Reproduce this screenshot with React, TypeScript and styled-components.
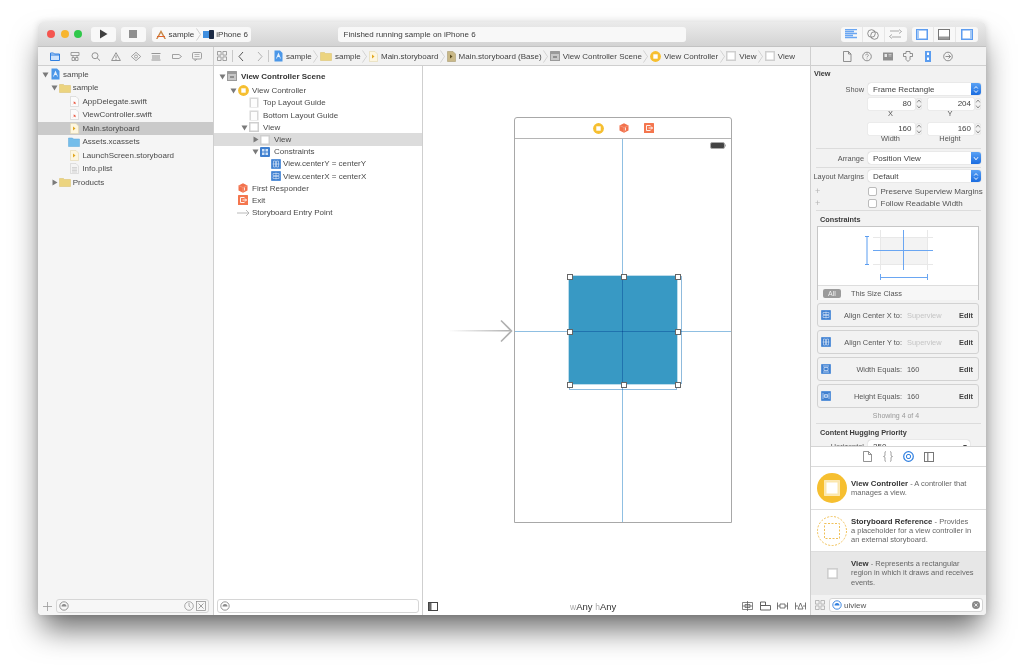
import React from 'react';
import styled, { createGlobalStyle } from 'styled-components';

const GlobalStyle = createGlobalStyle`
  html, body { margin: 0; padding: 0; background: #fff; height: 100%; overflow: hidden; }
  body { font-family: "Liberation Sans", Arial, sans-serif; color: #444; font-size: 8px; }
  #root { padding: 22px 38px 0; }
`;

const Window = styled.div`
  width: 948px;
  height: 593px;
  display: flex;
  flex-direction: column;
  border-radius: 5px 5px 4px 4px;
  overflow: hidden;
  background: #fff;
  box-shadow: 0 18px 30px -4px rgba(0, 0, 0, 0.58), 0 0 7px rgba(0, 0, 0, 0.12);
`;

/* ---------- title bar ---------- */
const TitleBar = styled.div`
  height: 25px;
  flex: none;
  display: flex;
  align-items: center;
  padding-left: 9px;
  background: linear-gradient(#ebebeb, #d3d3d3);
  border-bottom: 1px solid #c2c2c2;
  box-sizing: border-box;
`;
const Light = styled.span<{ $c: string }>`
  width: 8px;
  height: 8px;
  border-radius: 50%;
  background: ${p => p.$c};
  margin-right: 5.5px;
`;
const ToolButton = styled.div<{ $w: number; $ml?: number }>`
  width: ${p => p.$w}px;
  height: 15px;
  margin-left: ${p => p.$ml ?? 0}px;
  background: #f8f8f8;
  border-radius: 3px;
  display: flex;
  align-items: center;
  justify-content: center;
  flex: none;
`;
const Scheme = styled(ToolButton)`
  justify-content: flex-start;
  padding-left: 3px;
  box-sizing: border-box;
  gap: 2px;
  font-size: 8px;
  color: #3c3c3c;
  white-space: nowrap;
`;
const Status = styled(ToolButton)`
  justify-content: flex-start;
  padding-left: 6px;
  box-sizing: border-box;
  font-size: 8px;
  color: #3c3c3c;
`;
const Segments = styled.div<{ $ml: number }>`
  display: flex;
  width: 66px;
  height: 15px;
  margin-left: ${p => p.$ml}px;
  background: #f8f8f8;
  border-radius: 3px;
  flex: none;
`;
const Segment = styled.div`
  flex: 1;
  display: flex;
  align-items: center;
  justify-content: center;
  & + & { border-left: 1px solid #e6e6e6; }
`;

/* ---------- columns ---------- */
const Body = styled.div`
  flex: 1;
  display: flex;
  min-height: 0;
`;
const Column = styled.div<{ $w: number; $bg: string }>`
  width: ${p => p.$w}px;
  flex: none;
  display: flex;
  flex-direction: column;
  background: ${p => p.$bg};
  border-right: 1px solid #cfcfcf;
  box-sizing: border-box;
`;
const InspectorColumn = styled(Column)`
  border-right: 0;
  border-left: 1px solid #cfcfcf;
`;
const Editor = styled.div`
  flex: 1;
  display: flex;
  flex-direction: column;
  min-width: 0;
`;
const Strip = styled.div`
  height: 19px;
  flex: none;
  display: flex;
  align-items: center;
  background: #f2f2f2;
  border-bottom: 1px solid #cfcfcf;
  box-sizing: border-box;
`;
const NavTabs = styled(Strip)`
  padding-left: 12px;
  gap: 10.3px;
`;
const InspTabs = styled(Strip)`
  padding-left: 31px;
  gap: 10.3px;
`;
const TabCell = styled.span`
  width: 10px;
  flex: none;
  display: flex;
  justify-content: center;
`;
const PathBar = styled(Strip)`
  padding-left: 3px;
  font-size: 8px;
  color: #444;
  white-space: nowrap;
`;
const PathSep = styled.span`
  width: 1px;
  height: 12px;
  flex: none;
  background: #c8c8c8;
  margin: 0 5px;
`;
const PathGap = styled.span`
  width: 13px;
  flex: none;
`;
const Crumb = styled.span`
  display: flex;
  align-items: center;
  gap: 3px;
  flex: none;
`;
const Chevron = styled.svg`
  width: 5px;
  height: 13px;
  margin: 0 1.6px;
  flex: none;
`;
const SchemeChevron = styled(Chevron)`
  margin: 0;
`;

/* ---------- trees ---------- */
const Tree = styled.div<{ $top: number }>`
  flex: 1;
  padding-top: ${p => p.$top}px;
  min-height: 0;
`;
const Row = styled.div<{ $pad: number; $h: number; $sel?: string; $mb?: number }>`
  height: ${p => p.$h}px;
  margin-bottom: ${p => p.$mb ?? 0}px;
  display: flex;
  align-items: center;
  padding-left: ${p => p.$pad}px;
  background: ${p => p.$sel ?? 'transparent'};
  white-space: nowrap;
`;
const Disclosure = styled.span`
  width: 8px;
  flex: none;
  display: flex;
  justify-content: center;
`;
const IconSlot = styled.span`
  width: 12px;
  flex: none;
  display: flex;
  justify-content: center;
`;
const RowLabel = styled.span<{ $gap: number; $bold?: boolean }>`
  margin-left: ${p => p.$gap}px;
  font-size: 8px;
  font-weight: ${p => (p.$bold ? 700 : 400)};
  color: ${p => (p.$bold ? '#333' : '#4a4a4a')};
`;

/* ---------- footers ---------- */
const Footer = styled.div`
  height: 18px;
  flex: none;
  display: flex;
  align-items: center;
  box-sizing: border-box;
`;
const NavFooter = styled(Footer)`
  padding: 0 4px 0 5px;
  gap: 4px;
  color: #888;
`;
const Filter = styled.div<{ $bg: string }>`
  flex: 1;
  height: 14px;
  border: 1px solid #d6d6d6;
  border-radius: 3px;
  background: ${p => p.$bg};
  display: flex;
  align-items: center;
  padding: 0 2px;
  gap: 2px;
  box-sizing: border-box;
`;
const FilterFill = styled.span`
  flex: 1;
`;
const OutlineFooter = styled(Footer)`
  padding: 0 3px;
`;
const CanvasFooter = styled(Footer)`
  padding: 0 4px 0 5px;
  justify-content: space-between;
`;
const SizeClass = styled.span`
  font-size: 9.5px;
  color: #333;
  margin-left: 6px;
  small { font-size: 8.5px; color: #aaa; }
`;
const FooterIcons = styled.div`
  display: flex;
  align-items: center;
  gap: 6.5px;
`;

/* ---------- storyboard canvas ---------- */
const Canvas = styled.div`
  flex: 1;
  position: relative;
  background: #fff;
  min-height: 0;
`;
const Scene = styled.div`
  position: absolute;
  left: 91px;
  top: 51px;
  width: 218px;
  height: 406px;
  border: 1px solid #a8a8a8;
  border-radius: 3px 3px 0 0;
  box-sizing: border-box;
  background: #fff;
`;
const Dock = styled.div`
  height: 20px;
  border-bottom: 1px solid #b5b5b5;
  display: flex;
  align-items: center;
  justify-content: center;
  gap: 15px;
`;
const Guide = styled.div<{ $dir: 'h' | 'v' }>`
  position: absolute;
  background: #8fbfe2;
  mix-blend-mode: multiply;
  ${p =>
    p.$dir === 'v'
      ? 'left: 107px; top: 21px; bottom: 0; width: 1px;'
      : 'left: 0; right: 0; top: 213px; height: 1px;'}
  z-index: 2;
`;
const BlueView = styled.div`
  position: absolute;
  left: 54px;
  top: 158px;
  width: 108px;
  height: 108px;
  background: #3899c4;
  box-shadow: 0 0 0 0.5px #7db9d8;
`;
const Handle = styled.span<{ $x: number; $y: number }>`
  position: absolute;
  left: ${p => p.$x}px;
  top: ${p => p.$y}px;
  width: 4px;
  height: 4px;
  margin: -2.5px 0 0 -2.5px;
  background: #fff;
  border: 0.5px solid #666;
  z-index: 3;
`;
const BracketV = styled.div`
  position: absolute;
  left: 165px;
  top: 158px;
  width: 2px;
  height: 108px;
  border: 1px solid #8fbbdd;
  border-left-width: 0;
  box-sizing: border-box;
`;
const BracketH = styled.div`
  position: absolute;
  left: 54px;
  top: 269px;
  width: 108px;
  height: 3px;
  border: 1px solid #8fbbdd;
  border-top-width: 0;
  box-sizing: border-box;
`;
const Battery = styled.svg`
  position: absolute;
  right: 5px;
  top: 24px;
`;
const EntryArrow = styled.svg`
  position: absolute;
  left: 25px;
  top: 251px;
  z-index: 3;
`;

/* ---------- inspector ---------- */
const InspectorScroll = styled.div`
  height: 381px;
  flex: none;
  overflow: hidden;
  padding: 0 5px 0 0;
  box-sizing: border-box;
  border-bottom: 1px solid #d5d5d5;
`;
const InspTitle = styled.div`
  height: 14px;
  line-height: 15px;
  font-weight: 700;
  font-size: 7.3px;
  color: #3a3a3a;
  padding-left: 3px;
`;
const FormRow = styled.div<{ $mt: number }>`
  display: grid;
  grid-template-columns: 53px 113px;
  column-gap: 4px;
  align-items: center;
  margin-top: ${p => p.$mt}px;
`;
const FormLabel = styled.span`
  justify-self: end;
  white-space: nowrap;
  font-size: 7.4px;
  color: #555;
`;
const Select = styled.div`
  height: 12px;
  display: flex;
  align-items: center;
  padding-left: 5px;
  border-radius: 3px;
  background: #fff;
  box-shadow: 0 0 1px rgba(0, 0, 0, 0.35);
  font-size: 8px;
  color: #444;
  position: relative;
  overflow: hidden;
`;
const SelectCap = styled.span`
  position: absolute;
  right: 0;
  top: 0;
  bottom: 0;
  width: 10px;
  background: linear-gradient(#5aa2f5, #1a6ce0);
  display: flex;
  align-items: center;
  justify-content: center;
`;
const PlainCap = styled.span`
  position: absolute;
  right: 3px;
  top: 5px;
  border-top: 3px solid #444;
  border-left: 2px solid transparent;
  border-right: 2px solid transparent;
`;
const NumPair = styled.div`
  display: flex;
  gap: 6px;
`;
const NumCell = styled.div`
  width: 53.5px;
  display: flex;
  align-items: center;
  gap: 1px;
`;
const NumInput = styled.div`
  flex: 1;
  height: 12px;
  background: #fff;
  box-shadow: 0 0 1px rgba(0, 0, 0, 0.3);
  border-radius: 1px;
  text-align: right;
  line-height: 12px;
  padding-right: 3px;
  font-size: 8px;
  color: #444;
`;
const NumCaptions = styled.div`
  display: flex;
  gap: 6px;
  height: 8px;
  line-height: 8px;
  font-size: 7.4px;
  color: #555;
  span { width: 45px; margin-right: 8.5px; text-align: center; }
`;
const Rule = styled.div<{ $mt: number; $mb: number }>`
  height: 1px;
  background: #dcdcdc;
  margin: ${p => p.$mt}px 0 ${p => p.$mb}px 5px;
`;
const CheckRow = styled.div<{ $mt: number }>`
  display: flex;
  align-items: center;
  height: 10px;
  margin-top: ${p => p.$mt}px;
  padding-left: 4px;
  font-size: 8px;
  color: #555;
  white-space: nowrap;
`;
const Plus = styled.span`
  width: 53px;
  flex: none;
  color: #b5b5b5;
  font-size: 9px;
`;
const CheckBox = styled.span`
  width: 7px;
  height: 7px;
  flex: none;
  background: #fff;
  border: 0.5px solid #bbb;
  border-radius: 2px;
  margin-right: 3.5px;
`;
const SectionHead = styled.div<{ $mt: number }>`
  font-size: 7.3px;
  font-weight: 700;
  color: #3a3a3a;
  margin-top: ${p => p.$mt}px;
  padding-left: 9px;
  height: 10px;
  line-height: 10px;
`;
const ConstraintBox = styled.div`
  margin: 1px 2px 0 6px;
  height: 74px;
  border: 1px solid #c6c6c6;
  box-sizing: border-box;
  background: #fff;
  display: flex;
  flex-direction: column;
`;
const Diagram = styled.div`
  flex: 1;
  display: flex;
  justify-content: center;
`;
const SizeRow = styled.div`
  height: 14px;
  flex: none;
  background: #f7f7f7;
  border-top: 1px solid #ddd;
  display: flex;
  align-items: center;
  padding-left: 5px;
  gap: 10px;
  font-size: 7.4px;
  color: #555;
`;
const AllPill = styled.span`
  background: #9b9b9b;
  color: #f2f2f2;
  font-size: 7px;
  width: 18px;
  height: 9px;
  line-height: 9px;
  border-radius: 2px;
  text-align: center;
`;
const CardList = styled.div`
  margin: 3px 2px 0 6px;
  display: flex;
  flex-direction: column;
  gap: 3px;
`;
const Card = styled.div`
  height: 24px;
  border: 1px solid #d2d2d2;
  border-radius: 3px;
  box-sizing: border-box;
  display: grid;
  grid-template-columns: 12px 69px 50px 1fr;
  align-items: center;
  padding: 0 5px 0 3px;
  font-size: 7.4px;
  color: #555;
`;
const CardLabel = styled.span`
  text-align: right;
  white-space: nowrap;
`;
const CardValue = styled.span<{ $muted?: boolean }>`
  padding-left: 5px;
  color: ${p => (p.$muted ? '#c4c4c4' : '#555')};
  white-space: nowrap;
`;
const CardEdit = styled.span`
  text-align: right;
  font-weight: 700;
  color: #444;
`;
const Showing = styled.div`
  margin-top: 3px;
  text-align: center;
  font-size: 7px;
  color: #999;
  height: 9px;
  line-height: 9px;
`;
const HuggingRow = styled.div`
  margin-top: 2px;
  display: grid;
  grid-template-columns: 53px 102px;
  column-gap: 4px;
  align-items: center;
`;

/* ---------- library ---------- */
const LibTabs = styled.div`
  height: 20px;
  flex: none;
  display: flex;
  align-items: center;
  padding-left: 51px;
  gap: 10.5px;
  background: #fff;
  border-bottom: 1px solid #dcdcdc;
  box-sizing: border-box;
`;
const LibItem = styled.div<{ $sel?: boolean; $h: number }>`
  height: ${p => p.$h}px;
  flex: none;
  display: flex;
  align-items: center;
  box-sizing: border-box;
  background: ${p => (p.$sel ? '#e7e7e7' : '#fff')};
  border-bottom: 1px solid ${p => (p.$sel ? '#e7e7e7' : '#dedede')};
  padding-left: 6px;
`;
const LibIconSlot = styled.span`
  width: 30px;
  margin-right: 4px;
  flex: none;
  display: flex;
  justify-content: center;
`;
const LibText = styled.div`
  font-size: 7.5px;
  line-height: 9.2px;
  color: #666;
  white-space: nowrap;
  b { color: #333; font-weight: 700; font-size: 7.8px; }
`;
const SearchBar = styled.div`
  flex: 1;
  display: flex;
  align-items: center;
  padding: 0 3px 0 4px;
  gap: 4px;
  background: #f2f2f2;
`;
const SearchField = styled.div`
  flex: 1;
  height: 14px;
  background: #fff;
  border: 1px solid #d4d4d4;
  border-radius: 3px;
  box-sizing: border-box;
  display: flex;
  align-items: center;
  padding: 0 2px;
  gap: 2px;
  font-size: 8px;
  color: #555;
`;
const SearchText = styled.span`
  flex: 1;
`;
const IconImg = styled.svg`
  flex: none;
  display: block;
`;

/* ---------- icons ---------- */
const Svg = ({ w = 11, h = 11, vb, children }: { w?: number; h?: number; vb?: string; children: React.ReactNode }) => (
  <IconImg width={w} height={h} viewBox={vb ?? `0 0 ${w} ${h}`}>
    {children}
  </IconImg>
);

const GRAY = '#8a8a8a';
const BLUE = '#2f7fe0';

const Tri = ({ open }: { open?: boolean }) => (
  <Svg w={7} h={7}>
    {open ? <path d="M0.5 1.5h6L3.5 6.5z" fill="#7a7a7a" /> : <path d="M1.5 0.5v6L6.5 3.5z" fill="#7a7a7a" />}
  </Svg>
);
const AppIcon = () => (
  <Svg w={9} h={12}>
    <path d="M0.5 0.5h5.5l2.5 2.5v8.5h-8z" fill="#4b97e8" />
    <path d="M4.5 2.5l2.4 6H6l-.5-1.4h-2L3 8.5h-1z" fill="#e4f0fc" />
  </Svg>
);
const Folder = () => (
  <Svg w={12} h={10}>
    <path d="M0.5 1.5h4l1 1h6v7h-11z" fill="#ecd47f" stroke="#d9bf6a" strokeWidth="0.5" />
  </Svg>
);
const BlueFolder = () => (
  <Svg w={12} h={10}>
    <path d="M0.5 1h4l1 1h6v7.5h-11z" fill="#74bdea" stroke="#5aa7da" strokeWidth="0.5" />
  </Svg>
);
const SwiftFile = () => (
  <Svg w={9} h={11}>
    <path d="M0.5 0.5h5.5l2.5 2.5v7.5h-8z" fill="#fbfbfb" stroke="#cfcfcf" strokeWidth="0.6" />
    <path d="M2 8.5l3-1 1 1-1-3-1 1-1-2 1 3z" fill="#e8452c" />
  </Svg>
);
const BoardFile = ({ dark }: { dark?: boolean }) => (
  <Svg w={9} h={11}>
    <path d="M0.5 0.5h5.5l2.5 2.5v7.5h-8z" fill={dark ? '#c9b887' : '#fdf6e0'} stroke={dark ? '#a89a70' : '#e3d7ae'} strokeWidth="0.6" />
    <path d="M3 3.5l2.5 2-2.5 2z" fill={dark ? '#5a4c20' : '#e2a81f'} />
  </Svg>
);
const PlistFile = () => (
  <Svg w={9} h={11}>
    <path d="M0.5 0.5h5.5l2.5 2.5v7.5h-8z" fill="#f4f4f4" stroke="#cfcfcf" strokeWidth="0.6" />
    <path d="M2 4.5h5M2 6h5M2 7.5h5M2 9h5" stroke="#bdbdbd" strokeWidth="0.6" />
  </Svg>
);
const SceneIcon = () => (
  <Svg w={10} h={10}>
    <rect width="10" height="10" fill="#9a9a9a" rx="0.5" />
    <rect x="1" y="3" width="8" height="6" fill="#c7c7c7" />
    <rect x="3" y="5" width="4" height="2" fill="#8f8f8f" />
  </Svg>
);
const VcCircle = ({ s = 11 }: { s?: number }) => (
  <Svg w={s} h={s} vb="0 0 11 11">
    <circle cx="5.5" cy="5.5" r="5.4" fill="#f6bf30" />
    <rect x="3.3" y="3.3" width="4.4" height="4.4" fill="#fff" />
  </Svg>
);
const ViewBox = ({ s = 10 }: { s?: number }) => (
  <Svg w={s} h={s} vb="0 0 10 10">
    <rect x="0.75" y="0.75" width="8.5" height="8.5" fill="#fff" stroke="#cfcfcf" strokeWidth="1.5" />
  </Svg>
);
const GuideBox = () => (
  <Svg w={10} h={11}>
    <rect x="0.5" y="0.5" width="9" height="10" fill="#d8d8d8" />
    <rect x="2" y="2" width="6" height="8" fill="#fdfdfd" />
  </Svg>
);
const Responder = () => (
  <Svg w={10} h={10}>
    <path d="M5 0.2L9.5 2.5v5L5 9.8 0.5 7.5v-5z" fill="#f2714c" />
    <path d="M5 4.5v5M0.5 2.5L5 4.5l4.5-2" stroke="#f8b49e" strokeWidth="0.5" fill="none" />
    <path d="M6.5 4.5v3" stroke="#fff" strokeWidth="0.8" />
  </Svg>
);
const ExitIcon = () => (
  <Svg w={10} h={10}>
    <rect width="10" height="10" fill="#f4764e" rx="0.5" />
    <path d="M6.5 2.5h-4v5h4M4.5 5h4M7 3.5L8.5 5 7 6.5" stroke="#fff" strokeWidth="0.9" fill="none" />
  </Svg>
);
const EntryIcon = () => (
  <Svg w={13} h={8}>
    <path d="M0 4h12M9 1l3 3-3 3" stroke="#a8a8a8" strokeWidth="0.8" fill="none" />
  </Svg>
);
const ConstraintGroup = () => (
  <Svg w={10} h={10}>
    <rect width="10" height="10" rx="1" fill="#3f7fcf" />
    <path d="M2 2h2.5v2.5H2zM5.5 2H8v2.5H5.5zM2 5.5h2.5V8H2zM5.5 5.5H8V8H5.5z" fill="#cfe2f7" />
  </Svg>
);
const ConstraintIcon = ({ kind }: { kind: 'x' | 'y' | 'w' | 'h' }) => (
  <Svg w={10} h={10}>
    <rect width="10" height="10" rx="1.2" fill="#3f7fcf" />
    <rect x="0.6" y="0.6" width="8.8" height="8.8" rx="1" fill="none" stroke="#7fb0e8" strokeWidth="0.5" />
    {kind === 'x' && <path d="M5 1.5v7M2 2.5h6v2H2zM2 5.5h6v2H2z" stroke="#dbe9fa" strokeWidth="0.6" fill="none" />}
    {kind === 'y' && <path d="M1.5 5h7M2.5 2h2v6h-2zM5.5 2h2v6h-2z" stroke="#dbe9fa" strokeWidth="0.6" fill="none" />}
    {kind === 'w' && <path d="M2 2h6M2 8h6M3 3.5h4v3H3z" stroke="#dbe9fa" strokeWidth="0.7" fill="none" />}
    {kind === 'h' && <path d="M2 2v6M8 2v6M3.5 3.5h3v3h-3zM2.5 5h5" stroke="#dbe9fa" strokeWidth="0.7" fill="none" />}
  </Svg>
);
const GridIcon = ({ c = '#8c8c8c' }: { c?: string }) => (
  <Svg w={10} h={10}>
    <path d="M.5.5h3.6v3.6H.5zM5.9.5h3.6v3.6H5.9zM.5 5.9h3.6v3.6H.5zM5.9 5.9h3.6v3.6H5.9z" fill="none" stroke={c} strokeWidth="0.8" />
  </Svg>
);
const FilterGlyph = ({ c = '#8a8a8a' }: { c?: string }) => (
  <Svg w={10} h={10}>
    <circle cx="5" cy="5" r="4.2" fill="none" stroke={c} strokeWidth="0.9" />
    <path d="M2.5 5.5a2.5 2.5 0 0 1 5 0z" fill={c} />
  </Svg>
);
const SidebarIcon = () => (
  <Svg w={10} h={9}>
    <rect x="0.5" y="0.5" width="9" height="8" fill="#fff" stroke="#444" />
    <rect x="1" y="1" width="2.5" height="7" fill="#666" />
  </Svg>
);
const Chev = () => (
  <Chevron viewBox="0 0 5 13">
    <path d="M0.5 0.5L4.5 6.5 0.5 12.5" stroke="#c4c4c4" strokeWidth="0.7" fill="none" />
  </Chevron>
);
const Stepper = () => (
  <Svg w={6} h={12}>
    <path d="M1 4.5L3 2l2 2.5M1 7.5L3 10l2-2.5" stroke="#666" strokeWidth="0.7" fill="none" />
    <rect x="0.25" y="0.25" width="5.5" height="11.5" rx="2.5" fill="none" stroke="#dcdcdc" strokeWidth="0.5" />
  </Svg>
);
const UpDown = () => (
  <Svg w={6} h={9}>
    <path d="M1.2 3.5L3 1.5l1.8 2M1.2 5.5L3 7.5l1.8-2" stroke="#fff" strokeWidth="0.9" fill="none" />
  </Svg>
);
const DownOnly = () => (
  <Svg w={6} h={9}>
    <path d="M1 3.2L3 5.8l2-2.6" stroke="#fff" strokeWidth="1" fill="none" />
  </Svg>
);

const navTabIcons = [
  <Svg w={10} h={9}><path d="M.5 1h3l1 1h5v6.5h-9z" fill="#cfe3fb" stroke={BLUE} /><path d="M.5 3h9" stroke={BLUE} /></Svg>,
  <Svg w={10} h={9}><path d="M1 .5h8v3H1zM2 5.5h2.5v3H2zM5.5 5.5H8v3H5.5zM3 3.5v2M7 3.5v2" fill="none" stroke={GRAY} strokeWidth="0.8" /></Svg>,
  <Svg w={10} h={9}><circle cx="4" cy="3.7" r="3" fill="none" stroke={GRAY} strokeWidth="0.9" /><path d="M6.2 5.9L9 8.7" stroke={GRAY} /></Svg>,
  <Svg w={10} h={9}><path d="M5 .7L9.4 8.5H.6z" fill="none" stroke={GRAY} strokeWidth="0.9" /><path d="M5 3.3v3M5 7v.8" stroke={GRAY} /></Svg>,
  <Svg w={10} h={9}><path d="M5 .3L9.7 4.5 5 8.7.3 4.5z" fill="none" stroke={GRAY} strokeWidth="0.8" /><circle cx="5" cy="4.5" r="1.5" fill="none" stroke={GRAY} strokeWidth="0.7" /></Svg>,
  <Svg w={10} h={9}><path d="M.5 1.5h9M.5 8h9M2 3v4M4 3v4M6 3v4M8 3v4" stroke={GRAY} strokeWidth="0.9" /></Svg>,
  <Svg w={10} h={9}><path d="M.5 2.5h6.5l2.5 2-2.5 2H.5z" fill="none" stroke={GRAY} strokeWidth="0.8" /></Svg>,
  <Svg w={10} h={9}><rect x=".5" y=".5" width="9" height="6.5" rx="1.2" fill="none" stroke={GRAY} strokeWidth="0.8" /><path d="M3 7v2l2-2M2.5 2.5h5M2.5 4.5h5" stroke={GRAY} strokeWidth="0.6" fill="none" /></Svg>,
];

const inspTabIcons = [
  <Svg w={10} h={11}><path d="M1.5.5h5l2.5 2.5v7.5H1.5zM6.5.5V3H9" fill="none" stroke="#777" strokeWidth="0.8" /></Svg>,
  <Svg w={10} h={11}><circle cx="5" cy="5.5" r="4.3" fill="none" stroke="#777" strokeWidth="0.8" /><path d="M3.7 4.3a1.3 1.3 0 1 1 2 1.1c-.5.3-.7.5-.7 1M5 7.5v.8" fill="none" stroke="#777" strokeWidth="0.7" /></Svg>,
  <Svg w={10} h={11}><rect y="1.5" width="10" height="8" fill="#8f8f8f" /><rect x="1.5" y="3" width="2.5" height="3" fill="#e8e8e8" /><path d="M5.5 3.5h3M5.5 5h3" stroke="#e8e8e8" strokeWidth="0.6" /></Svg>,
  <Svg w={10} h={11}><path d="M3 .5h4v2h2.5v3H7v3L5 10.5 3 8.5v-3H.5v-3H3z" fill="none" stroke="#777" strokeWidth="0.8" /></Svg>,
  <Svg w={8} h={11}><rect width="6" height="11" x="1" fill="#5b9df0" /><rect x="3" y="1.5" width="2" height="2.5" fill="#fff" /><rect x="3" y="6.5" width="2" height="2.5" fill="#fff" /></Svg>,
  <Svg w={10} h={11}><circle cx="5" cy="5.5" r="4.3" fill="none" stroke="#777" strokeWidth="0.8" /><path d="M2.5 5.5h5M5.5 3.5l2 2-2 2" fill="none" stroke="#777" strokeWidth="0.8" /></Svg>,
];

const libTabIcons = [
  <Svg w={9} h={11}><path d="M.5.5h5l3 3v7h-8zM5.5.5v3h3" fill="none" stroke="#777" strokeWidth="0.8" /></Svg>,
  <Svg w={10} h={11}><path d="M3 .5C1.5.5 2 2.5 2 4S.5 5.5.5 5.5 2 5.5 2 7s-.5 3.5 1 3.5M7 .5c1.5 0 1 2 1 3.5s1.5 1.5 1.5 1.5S8 5.5 8 7s.5 3.5-1 3.5" fill="none" stroke="#777" strokeWidth="0.7" /></Svg>,
  <Svg w={11} h={11}><circle cx="5.5" cy="5.5" r="4.8" fill="none" stroke={BLUE} strokeWidth="1.2" /><rect x="3.5" y="3.5" width="4" height="4" rx="1.5" fill="none" stroke={BLUE} /></Svg>,
  <Svg w={10} h={10}><rect x=".5" y=".5" width="9" height="9" fill="none" stroke="#777" /><rect x="3" y="1" width="1.5" height="8" fill="#999" /></Svg>,
];

/* ---------- data ---------- */
type TreeItem = { depth: number; arrow?: 'open' | 'closed'; icon: React.ReactNode; label: string; selected?: boolean; bold?: boolean };

const navItems: TreeItem[] = [
  { depth: 0, arrow: 'open', icon: <AppIcon />, label: 'sample' },
  { depth: 1, arrow: 'open', icon: <Folder />, label: 'sample' },
  { depth: 2, icon: <SwiftFile />, label: 'AppDelegate.swift' },
  { depth: 2, icon: <SwiftFile />, label: 'ViewController.swift' },
  { depth: 2, icon: <BoardFile />, label: 'Main.storyboard', selected: true },
  { depth: 2, icon: <BlueFolder />, label: 'Assets.xcassets' },
  { depth: 2, icon: <BoardFile />, label: 'LaunchScreen.storyboard' },
  { depth: 2, icon: <PlistFile />, label: 'Info.plist' },
  { depth: 1, arrow: 'closed', icon: <Folder />, label: 'Products' },
];

const outlineItems: TreeItem[] = [
  { depth: 0, arrow: 'open', icon: <SceneIcon />, label: 'View Controller Scene', bold: true },
  { depth: 1, arrow: 'open', icon: <VcCircle />, label: 'View Controller' },
  { depth: 2, icon: <GuideBox />, label: 'Top Layout Guide' },
  { depth: 2, icon: <GuideBox />, label: 'Bottom Layout Guide' },
  { depth: 2, arrow: 'open', icon: <ViewBox />, label: 'View' },
  { depth: 3, arrow: 'closed', icon: <ViewBox />, label: 'View', selected: true },
  { depth: 3, arrow: 'open', icon: <ConstraintGroup />, label: 'Constraints' },
  { depth: 4, icon: <ConstraintIcon kind="y" />, label: 'View.centerY = centerY' },
  { depth: 4, icon: <ConstraintIcon kind="x" />, label: 'View.centerX = centerX' },
  { depth: 1, icon: <Responder />, label: 'First Responder' },
  { depth: 1, icon: <ExitIcon />, label: 'Exit' },
  { depth: 1, icon: <EntryIcon />, label: 'Storyboard Entry Point' },
];

const crumbs: { icon: React.ReactNode; label: string }[] = [
  { icon: <AppIcon />, label: 'sample' },
  { icon: <Folder />, label: 'sample' },
  { icon: <BoardFile />, label: 'Main.storyboard' },
  { icon: <BoardFile dark />, label: 'Main.storyboard (Base)' },
  { icon: <SceneIcon />, label: 'View Controller Scene' },
  { icon: <VcCircle />, label: 'View Controller' },
  { icon: <ViewBox />, label: 'View' },
  { icon: <ViewBox />, label: 'View' },
];

const constraints = [
  { kind: 'x' as const, label: 'Align Center X to:', value: 'Superview', muted: true },
  { kind: 'y' as const, label: 'Align Center Y to:', value: 'Superview', muted: true },
  { kind: 'w' as const, label: 'Width Equals:', value: '160' },
  { kind: 'h' as const, label: 'Height Equals:', value: '160' },
];

const handles = [
  [54, 158], [108, 158], [162, 158],
  [54, 213], [162, 213],
  [54, 266], [108, 266], [162, 266],
];

export default function App() {
  return (
    <>
      <GlobalStyle />
      <Window>
        <TitleBar>
          <Light $c="#f5554f" />
          <Light $c="#f7b52f" />
          <Light $c="#2fc84a" />
          <ToolButton $w={25} $ml={3}>
            <Svg w={9} h={10}><path d="M1 0.5v9l7.5-4.5z" fill="#3f3f3f" /></Svg>
          </ToolButton>
          <ToolButton $w={25} $ml={5}>
            <Svg w={8} h={8}><rect width="8" height="8" fill="#8f8f8f" /></Svg>
          </ToolButton>
          <Scheme $w={99} $ml={6}>
            <Svg w={12} h={11}>
              <path d="M6 1L11 10H9.5L6 4 2.5 10H1z" fill="#c98a4a" />
              <path d="M2 7.5h8" stroke="#e0632e" strokeWidth="1" />
            </Svg>
            <span>sample</span>
            <SchemeChevron viewBox="0 0 5 13">
              <path d="M0.5 0.5L4.5 6.5 0.5 12.5" stroke="#bdbdbd" strokeWidth="0.7" fill="none" />
            </SchemeChevron>
            <Svg w={11} h={9}>
              <rect x="0" y="1" width="8" height="7" fill="#3f8fe0" />
              <rect x="6" y="0" width="5" height="9" rx="0.8" fill="#1b2a45" />
            </Svg>
            <span>iPhone 6</span>
          </Scheme>
          <Status $w={348} $ml={87}>Finished running sample on iPhone 6</Status>
          <Segments $ml={155}>
            <Segment>
              <Svg w={13} h={10}><path d="M0 .5h12M0 2.5h9M0 4.5h12M0 6.5h8M0 8.5h12" stroke="#6aa6f2" strokeWidth="1.3" /></Svg>
            </Segment>
            <Segment>
              <Svg w={12} h={11}><circle cx="4.5" cy="4.5" r="3.8" fill="none" stroke="#777" strokeWidth="0.8" /><circle cx="7.5" cy="6.5" r="3.8" fill="none" stroke="#777" strokeWidth="0.8" /></Svg>
            </Segment>
            <Segment>
              <Svg w={13} h={10}><path d="M3 8H12M0.5 7.5l2.5-2M0.5 7.5l2.5 2M10 2H1M12.5 2.5l-2.5-2M12.5 2.5L10 4.5" stroke="#888" strokeWidth="0.7" fill="none" /></Svg>
            </Segment>
          </Segments>
          <Segments $ml={5}>
            <Segment>
              <Svg w={12} h={11}><rect x=".75" y=".75" width="10.5" height="9.5" fill="#fff" stroke="#5c9cf0" strokeWidth="1.5" /><rect x="1" y="1" width="2" height="9" fill="#a5c9f6" /></Svg>
            </Segment>
            <Segment>
              <Svg w={12} h={11}><rect x=".5" y=".5" width="11" height="10" fill="#fff" stroke="#777" /><rect x="1" y="7.5" width="10" height="3" fill="#999" /></Svg>
            </Segment>
            <Segment>
              <Svg w={12} h={11}><rect x=".75" y=".75" width="10.5" height="9.5" fill="#fff" stroke="#5c9cf0" strokeWidth="1.5" /><rect x="9" y="1" width="2" height="9" fill="#a5c9f6" /></Svg>
            </Segment>
          </Segments>
        </TitleBar>
        <Body>
          <Column $w={176} $bg="#f5f5f5">
            <NavTabs>{navTabIcons.map((icon, i) => <TabCell key={i}>{icon}</TabCell>)}</NavTabs>
            <Tree $top={1.5}>
              {navItems.map((it, i) => (
                <Row key={i} $pad={3 + it.depth * 9.7} $h={13.5} $sel={it.selected ? '#cacaca' : undefined}>
                  <Disclosure>{it.arrow && <Tri open={it.arrow === 'open'} />}</Disclosure>
                  <IconSlot>{it.icon}</IconSlot>
                  <RowLabel $gap={2}>{it.label}</RowLabel>
                </Row>
              ))}
            </Tree>
            <NavFooter>
              <Svg w={9} h={9}><path d="M4.5 0v9M0 4.5h9" stroke="#999" strokeWidth="0.8" /></Svg>
              <Filter $bg="#f7f7f7">
                <FilterGlyph />
                <FilterFill />
                <Svg w={10} h={10}><circle cx="5" cy="5" r="4.3" fill="none" stroke="#888" strokeWidth="0.7" /><path d="M5 2v3l1.5 1.5" stroke="#888" strokeWidth="0.7" fill="none" /></Svg>
                <Svg w={10} h={10}><rect x=".5" y=".5" width="9" height="9" fill="none" stroke="#888" strokeWidth="0.7" /><path d="M2.5 2.5l5 5M7.5 2.5l-5 5" stroke="#888" strokeWidth="0.8" /></Svg>
              </Filter>
            </NavFooter>
          </Column>
          <Editor>
            <PathBar>
              <GridIcon />
              <PathSep />
              <Svg w={6} h={11}><path d="M5 1L1 5.5 5 10" stroke="#444" strokeWidth="0.9" fill="none" /></Svg>
              <PathGap />
              <Svg w={6} h={11}><path d="M1 1l4 4.5L1 10" stroke="#aaa" strokeWidth="0.9" fill="none" /></Svg>
              <PathSep />
              {crumbs.map((c, i) => (
                <React.Fragment key={i}>
                  {i > 0 && <Chev />}
                  <Crumb>{c.icon}<span>{c.label}</span></Crumb>
                </React.Fragment>
              ))}
            </PathBar>
            <Body>
              <Column $w={209} $bg="#fff">
                <Tree $top={4}>
                  {outlineItems.map((it, i) => (
                    <Row key={i} $pad={4 + it.depth * 11} $h={12.2} $mb={i === 0 ? 2.5 : 0} $sel={it.selected ? '#dcdcdc' : undefined}>
                      <Disclosure>{it.arrow && <Tri open={it.arrow === 'open'} />}</Disclosure>
                      <IconSlot>{it.icon}</IconSlot>
                      <RowLabel $gap={it.depth === 4 ? 1 : 3} $bold={it.bold}>{it.label}</RowLabel>
                    </Row>
                  ))}
                </Tree>
                <OutlineFooter>
                  <Filter $bg="#fff">
                    <FilterGlyph />
                  </Filter>
                </OutlineFooter>
              </Column>
              <Editor>
                <Canvas>
                  <EntryArrow width="66" height="28" viewBox="0 0 66 28">
                    <defs>
                      <linearGradient id="entry" x1="0" x2="1" y1="0" y2="0">
                        <stop offset="0" stopColor="#b0b0b0" stopOpacity="0" />
                        <stop offset="1" stopColor="#b0b0b0" />
                      </linearGradient>
                    </defs>
                    <rect x="0" y="13" width="63" height="1.5" fill="url(#entry)" />
                    <path d="M53 3.5L63.5 14 53 24.5" stroke="#b0b0b0" strokeWidth="1.6" fill="none" />
                  </EntryArrow>
                  <Scene>
                    <Dock>
                      <VcCircle />
                      <Responder />
                      <ExitIcon />
                    </Dock>
                    <Battery width="16" height="7" viewBox="0 0 16 7">
                      <rect x="0.5" y="0.5" width="14" height="6" rx="1.5" fill="#444" stroke="#aaa" />
                      <rect x="15" y="2.5" width="1" height="2" fill="#aaa" />
                    </Battery>
                    <BlueView />
                    <Guide $dir="v" />
                    <Guide $dir="h" />
                    <BracketV />
                    <BracketH />
                    {handles.map(([x, y], i) => <Handle key={i} $x={x} $y={y} />)}
                  </Scene>
                </Canvas>
                <CanvasFooter>
                  <SidebarIcon />
                  <SizeClass><small>w</small>Any <small>h</small>Any</SizeClass>
                  <FooterIcons>
                    <Svg w={11} h={10}><path d="M.5 1.5h10v7H.5zM5.5 0v10M.5 5h10M3 3.5h5v3H3z" fill="none" stroke="#555" strokeWidth="0.7" /></Svg>
                    <Svg w={11} h={10}><path d="M.5 1h5v3.5h-5zM.5 4.5h10V9H.5z" fill="none" stroke="#555" strokeWidth="0.9" /></Svg>
                    <Svg w={11} h={10}><path d="M.5 1.5v7M10.5 1.5v7M3 3h5v4H3zM.5 5H3M8 5h2.5" fill="none" stroke="#555" strokeWidth="0.8" /></Svg>
                    <Svg w={11} h={10}><path d="M.5 1.5v7M10.5 1.5v7M5.5 2l-2.5 6h5zM.5 5H3M8 5h2.5" fill="none" stroke="#555" strokeWidth="0.8" /></Svg>
                  </FooterIcons>
                </CanvasFooter>
              </Editor>
            </Body>
          </Editor>
          <InspectorColumn $w={176} $bg="#f2f2f2">
            <InspTabs>{inspTabIcons.map((icon, i) => <TabCell key={i}>{icon}</TabCell>)}</InspTabs>
            <InspectorScroll>
              <InspTitle>View</InspTitle>
              <FormRow $mt={3}>
                <FormLabel>Show</FormLabel>
                <Select>Frame Rectangle<SelectCap><UpDown /></SelectCap></Select>
              </FormRow>
              <FormRow $mt={3}>
                <span />
                <NumPair>
                  <NumCell><NumInput>80</NumInput><Stepper /></NumCell>
                  <NumCell><NumInput>204</NumInput><Stepper /></NumCell>
                </NumPair>
              </FormRow>
              <FormRow $mt={0}>
                <span />
                <NumCaptions><span>X</span><span>Y</span></NumCaptions>
              </FormRow>
              <FormRow $mt={5}>
                <span />
                <NumPair>
                  <NumCell><NumInput>160</NumInput><Stepper /></NumCell>
                  <NumCell><NumInput>160</NumInput><Stepper /></NumCell>
                </NumPair>
              </FormRow>
              <FormRow $mt={0}>
                <span />
                <NumCaptions><span>Width</span><span>Height</span></NumCaptions>
              </FormRow>
              <Rule $mt={5} $mb={3} />
              <FormRow $mt={0}>
                <FormLabel>Arrange</FormLabel>
                <Select>Position View<SelectCap><DownOnly /></SelectCap></Select>
              </FormRow>
              <Rule $mt={3} $mb={2} />
              <FormRow $mt={0}>
                <FormLabel>Layout Margins</FormLabel>
                <Select>Default<SelectCap><UpDown /></SelectCap></Select>
              </FormRow>
              <CheckRow $mt={4}><Plus>+</Plus><CheckBox />Preserve Superview Margins</CheckRow>
              <CheckRow $mt={2}><Plus>+</Plus><CheckBox />Follow Readable Width</CheckRow>
              <Rule $mt={2} $mb={0} />
              <SectionHead $mt={4}>Constraints</SectionHead>
              <ConstraintBox>
                <Diagram>
                  <svg width="72" height="58" viewBox="0 0 72 58">
                    <path d="M3 9.5h4M5 9.5v28M3 37.5h4" stroke="#5b9df0" fill="none" />
                    <rect x="18.5" y="10.5" width="47" height="27" fill="#f3f3f3" stroke="#dcdcdc" />
                    <path d="M18.5 3v40M65.5 3v40M11 10.5h60M11 37.5h60" stroke="#e8e8e8" fill="none" />
                    <path d="M41.5 3v40M11 23.5h60" stroke="#6aa6f2" fill="none" />
                    <path d="M18.5 47v6M65.5 47v6M18.5 50.5h47" stroke="#6aa6f2" fill="none" />
                  </svg>
                </Diagram>
                <SizeRow><AllPill>All</AllPill>This Size Class</SizeRow>
              </ConstraintBox>
              <CardList>
                {constraints.map(c => (
                  <Card key={c.kind}>
                    <ConstraintIcon kind={c.kind} />
                    <CardLabel>{c.label}</CardLabel>
                    <CardValue $muted={c.muted}>{c.value}</CardValue>
                    <CardEdit>Edit</CardEdit>
                  </Card>
                ))}
              </CardList>
              <Showing>Showing 4 of 4</Showing>
              <Rule $mt={3} $mb={0} />
              <SectionHead $mt={4}>Content Hugging Priority</SectionHead>
              <HuggingRow>
                <FormLabel>Horizontal</FormLabel>
                <Select>250<PlainCap /></Select>
              </HuggingRow>
            </InspectorScroll>
            <LibTabs>{libTabIcons.map((icon, i) => <TabCell key={i}>{icon}</TabCell>)}</LibTabs>
            <LibItem $h={43}>
              <LibIconSlot>
                <svg width="30" height="30" viewBox="0 0 30 30">
                  <circle cx="15" cy="15" r="15" fill="#f6bf30" />
                  <rect x="7.5" y="7.5" width="15" height="15" fill="#fbe7ad" stroke="#fff" strokeDasharray="1 1" />
                  <rect x="9.5" y="9.5" width="11" height="11" fill="#fff" />
                </svg>
              </LibIconSlot>
              <LibText><b>View Controller</b> - A controller that<br />manages a view.</LibText>
            </LibItem>
            <LibItem $h={42}>
              <LibIconSlot>
                <svg width="30" height="30" viewBox="0 0 30 30">
                  <circle cx="15" cy="15" r="14.5" fill="#fff" stroke="#f0c058" strokeDasharray="2 1.5" />
                  <rect x="7.5" y="7.5" width="15" height="15" fill="#fff" stroke="#f0c058" strokeDasharray="2 1.5" />
                </svg>
              </LibIconSlot>
              <LibText><b>Storyboard Reference</b> - Provides<br />a placeholder for a view controller in<br />an external storyboard.</LibText>
            </LibItem>
            <LibItem $h={43} $sel>
              <LibIconSlot><ViewBox s={11} /></LibIconSlot>
              <LibText><b>View</b> - Represents a rectangular<br />region in which it draws and receives<br />events.</LibText>
            </LibItem>
            <SearchBar>
              <GridIcon c="#aaa" />
              <SearchField>
                <FilterGlyph c={BLUE} />
                <SearchText>uiview</SearchText>
                <Svg w={8} h={8}><circle cx="4" cy="4" r="4" fill="#8a8a8a" /><path d="M2.5 2.5l3 3M5.5 2.5l-3 3" stroke="#fff" strokeWidth="0.8" /></Svg>
              </SearchField>
            </SearchBar>
          </InspectorColumn>
        </Body>
      </Window>
    </>
  );
}
